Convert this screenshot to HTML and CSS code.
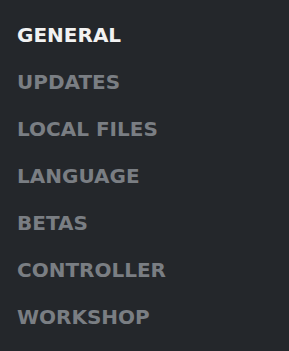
FILE: index.html
```html
<!DOCTYPE html>
<html>
<head>
<meta charset="utf-8">
<link rel="stylesheet" href="styles.css">
</head>
<body>
<nav class="menu">
  <div class="item active">GENERAL</div>
  <div class="item">UPDATES</div>
  <div class="item">LOCAL FILES</div>
  <div class="item">LANGUAGE</div>
  <div class="item">BETAS</div>
  <div class="item">CONTROLLER</div>
  <div class="item">WORKSHOP</div>
</nav>
</body>
</html>
```

FILE: styles.css
```css
html, body {
  margin: 0;
  padding: 0;
  background: #24272b;
  width: 289px;
  height: 351px;
  overflow: hidden;
}
.menu {
  display: flex;
  flex-direction: column;
  padding: 22px 0 0 17px;
}
.item {
  font-family: "DejaVu Sans", sans-serif;
  font-weight: 700;
  font-size: 20px;
  line-height: 27px;
  height: 47px;
  color: #7a7e83;
}
.item.active {
  color: #f2f2f2;
}
```
